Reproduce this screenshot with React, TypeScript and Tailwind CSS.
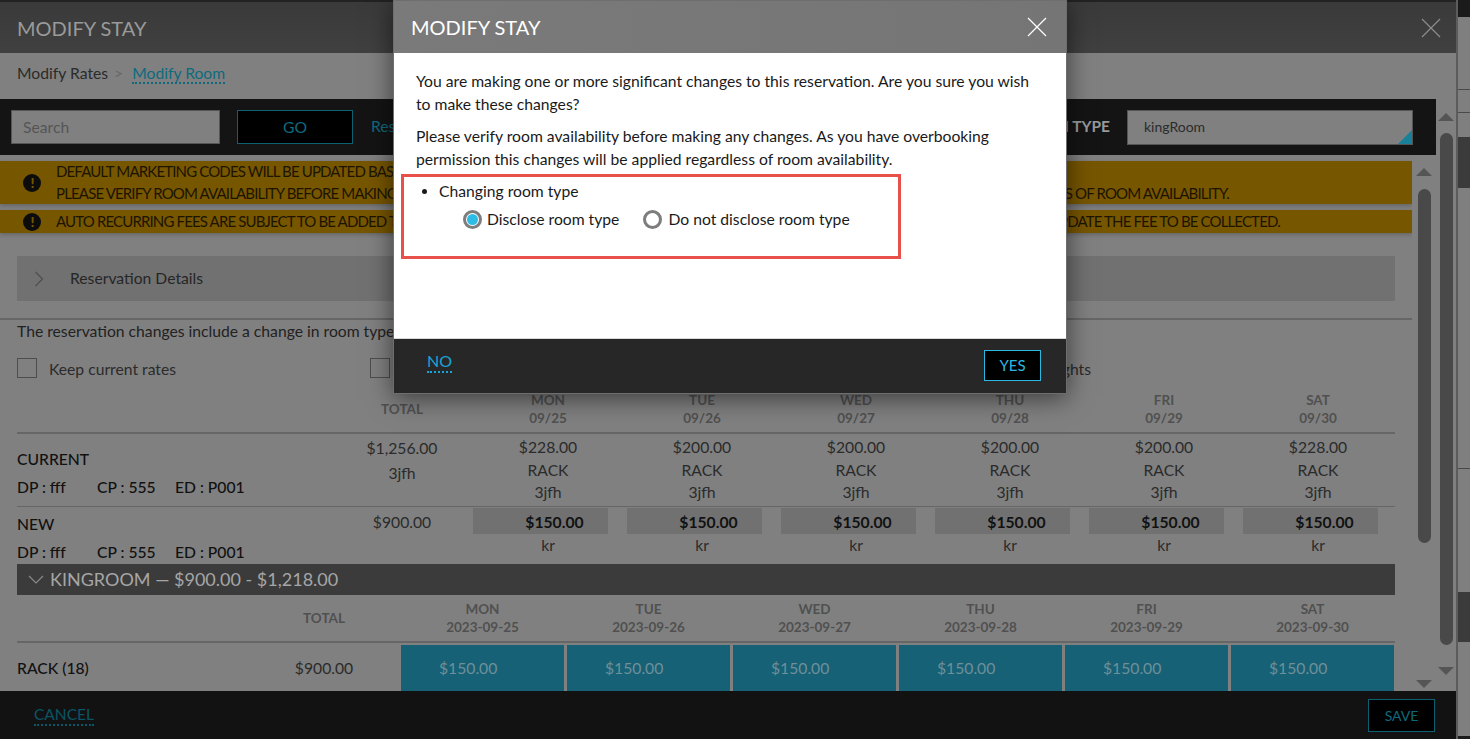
const days1 = [
  { d: 'MON', s: '09/25', p: '$228.00' },
  { d: 'TUE', s: '09/26', p: '$200.00' },
  { d: 'WED', s: '09/27', p: '$200.00' },
  { d: 'THU', s: '09/28', p: '$200.00' },
  { d: 'FRI', s: '09/29', p: '$200.00' },
  { d: 'SAT', s: '09/30', p: '$228.00' },
]

const days2 = [
  { d: 'MON', s: '2023-09-25' },
  { d: 'TUE', s: '2023-09-26' },
  { d: 'WED', s: '2023-09-27' },
  { d: 'THU', s: '2023-09-28' },
  { d: 'FRI', s: '2023-09-29' },
  { d: 'SAT', s: '2023-09-30' },
]

function Close({ className }: { className: string }) {
  return (
    <svg width="20" height="20" viewBox="0 0 20 20" className={className} fill="none" stroke="currentColor" strokeWidth="1.2">
      <path d="M1 1L19 19M19 1L1 19" />
    </svg>
  )
}

function Alert() {
  return (
    <span className="w-[18px] h-[18px] rounded-full bg-[#0c0c0c] text-[#775600] flex items-center justify-center shrink-0 text-[14px] font-black leading-none">!</span>
  )
}

function ScrollBar({ h, thumb }: { h: string; thumb: string }) {
  return (
    <div className={`w-[16px] flex flex-col items-center ${h}`}>
      <div className="w-0 h-0 border-x-[8px] border-x-transparent border-b-[8px] border-b-[#555]" />
      <div className={`w-[13px] rounded-full bg-[#494949] ${thumb}`} />
      <div className="flex-1" />
      <div className="w-0 h-0 border-x-[8px] border-x-transparent border-t-[8px] border-t-[#555]" />
    </div>
  )
}

export default function App() {
  return (
    <div className="relative w-[1470px] h-[739px] overflow-hidden bg-[#7f7f7f] font-['Lato','Carlito','Open_Sans',sans-serif] text-[15.7px] text-[#262626]">
      <div className="flex h-full">
        {/* stay panel behind the dialog */}
        <div className="w-[1458px] h-full flex flex-col border-r-2 border-[#5c5c5c]">
          <div className="h-[2px] bg-[#222] shrink-0" />
          <div className="h-[51px] shrink-0 bg-gradient-to-b from-[#3a3a3a] to-[#404040] flex items-center justify-between pl-[17px] pr-[15px]">
            <span className="text-[20px] text-[#9a9a9a]">MODIFY STAY</span>
            <Close className="text-[#8c8c8c]" />
          </div>

          <div className="flex-1 min-h-0 flex bg-[#808080]">
            <div className="w-[1436px] shrink-0 flex flex-col min-h-0">
              <div className="h-[46px] shrink-0 flex items-center pl-[17px] pb-[4px]">
                <span className="text-[#2b2b2b]">Modify Rates</span>
                <span className="text-[#666] ml-[6px] mr-[9px]">&gt;</span>
                <span className="text-[#0f6a7e] border-b-2 border-dotted border-[#0f6a7e] leading-[18px]">Modify Room</span>
              </div>

              <div className="h-[56px] shrink-0 bg-[#141414] flex items-center pl-[11px]">
                <div className="w-[209px] h-[34px] bg-[#808080] border border-[#555] pl-[11px] pt-[2px] flex items-center text-[#555]">Search</div>
                <div className="w-[116px] h-[34px] ml-[17px] pt-[2px] bg-black border border-[#0e5f72] text-[#0f6a7e] flex items-center justify-center">GO</div>
                <span className="ml-[18px] text-[#0f6a7e]">Reset</span>
                <div className="flex-1" />
                <span className="font-bold text-[#999] text-[15.5px]">ROOM TYPE</span>
                <div className="relative w-[286px] h-[35px] ml-[17px] mr-[23px] bg-[#808080] border border-[#555] pl-[16px] pb-[2px] flex items-center text-[14px] text-[#2b2b2b]">
                  kingRoom
                  <span className="absolute right-0 bottom-0 w-0 h-0 border-l-[14px] border-l-transparent border-b-[14px] border-b-[#19809a]" />
                </div>
              </div>

              <div className="flex-1 min-h-0 flex">
                <div className="w-[1412px] shrink-0 flex flex-col min-h-0 overflow-hidden">
                  <div className="mt-[6px] h-[43px] shrink-0 bg-[#775600] flex items-center pl-[23px] gap-[15px] text-[#1c1400] text-[15px] tracking-[-0.85px] leading-[21.5px] shadow-[0_2px_4px_rgba(0,0,0,0.2)] whitespace-nowrap">
                    <Alert />
                    <div>
                      <div>DEFAULT MARKETING CODES WILL BE UPDATED BASED ON THE NEW ROOM TYPE.</div>
                      <div>PLEASE VERIFY ROOM AVAILABILITY BEFORE MAKING ANY CHANGES. AS YOU HAVE OVERBOOKING PERMISSION THIS CHANGES WILL BE APPLIED REGARDLESS OF ROOM AVAILABILITY.</div>
                    </div>
                  </div>
                  <div className="mt-[6px] h-[23px] shrink-0 bg-[#775600] flex items-center pl-[23px] gap-[15px] text-[#1c1400] text-[15px] tracking-[-0.85px] shadow-[0_2px_4px_rgba(0,0,0,0.2)] whitespace-nowrap">
                    <Alert />
                    <span>AUTO RECURRING FEES ARE SUBJECT TO BE ADDED TO THIS RESERVATION. IF YOU WISH TO CHANGE THE RECURRING FEES, PLEASE GO TO THE FOLIO AND UPDATE THE FEE TO BE COLLECTED.</span>
                  </div>

                  <div className="mt-[23px] ml-[17px] w-[1378px] h-[45px] shrink-0 bg-[#717171] flex items-center pl-[17px]">
                    <svg width="10" height="16" viewBox="0 0 10 16" fill="none" stroke="#4f4f4f" strokeWidth="1.2">
                      <path d="M1.5 1L8.5 8L1.5 15" />
                    </svg>
                    <span className="ml-[26px] text-[#262626]">Reservation Details</span>
                  </div>

                  <div className="mt-[17px] h-[2px] shrink-0 bg-[#666]" />
                  <div className="pl-[17px] h-[23px] shrink-0 leading-[22px] text-[#222]">The reservation changes include a change in room type</div>

                  <div className="mt-[15px] h-[20px] shrink-0 flex items-center pl-[17px]">
                    <span className="w-[20px] h-[20px] border border-[#4d4d4d] shrink-0" />
                    <span className="ml-[12px] w-[321px] pt-[3px] text-[#2b2b2b]">Keep current rates</span>
                    <span className="w-[20px] h-[20px] border border-[#4d4d4d] shrink-0" />
                    <span className="w-[701px] pt-[3px] text-right text-[#2b2b2b]">Keep current rates for remaining nights</span>
                  </div>

                  {/* current vs new rates */}
                  <div className="ml-[17px] w-[1378px] shrink-0 mt-[13px] grid grid-cols-[326px_128px_repeat(6,154px)] h-[43px] border-b-2 border-[#666] text-[13.5px] font-bold text-[#505050] text-center leading-[18px]">
                    <div />
                    <div className="pr-[10px] pt-[9px] leading-[18px]">TOTAL</div>
                    {days1.map((d) => (
                      <div key={d.d}>
                        <div>{d.d}</div>
                        <div>{d.s}</div>
                      </div>
                    ))}
                  </div>

                  <div className="ml-[17px] w-[1378px] shrink-0 grid grid-cols-[326px_128px_repeat(6,154px)] h-[73px] border-b border-[#666] text-center text-[#2b2b2b]">
                    <div className="text-left text-[#111] font-medium pt-[13px]">
                      <div className="h-[29px] leading-[24px]">CURRENT</div>
                      <div className="flex"><span className="w-[80px]">DP : fff</span><span className="w-[78px]">CP : 555</span><span>ED : P001</span></div>
                    </div>
                    <div className="pr-[10px] pt-[2px] leading-[24.5px]">
                      <div>$1,256.00</div>
                      <div>3jfh</div>
                    </div>
                    {days1.map((d) => (
                      <div key={d.d} className="pt-[2px] leading-[22.5px]">
                        <div>{d.p}</div>
                        <div>RACK</div>
                        <div>3jfh</div>
                      </div>
                    ))}
                  </div>

                  <div className="ml-[17px] w-[1378px] shrink-0 grid grid-cols-[326px_128px_repeat(6,154px)] h-[57px] text-center text-[#2b2b2b]">
                    <div className="text-left text-[#111] font-medium pt-[6px]">
                      <div className="h-[28px] leading-[22px]">NEW</div>
                      <div className="flex"><span className="w-[80px]">DP : fff</span><span className="w-[78px]">CP : 555</span><span>ED : P001</span></div>
                    </div>
                    <div className="pr-[10px] pt-[4px] leading-[22px]">$900.00</div>
                    {days1.map((d) => (
                      <div key={d.d} className="pt-[1px]">
                        <div className="ml-[2px] w-[135px] h-[26px] bg-[#717171] flex items-center justify-center pl-[28px] pt-[4px] font-bold text-[#111]">$150.00</div>
                        <div className="leading-[24px] -mt-[1px]">kr</div>
                      </div>
                    ))}
                  </div>

                  <div className="ml-[17px] w-[1378px] h-[31px] shrink-0 bg-[#3b3b3b] flex items-center pl-[11px] text-[18px] text-[#a6a6a6]">
                    <svg width="16" height="10" viewBox="0 0 16 10" fill="none" stroke="#8c8c8c" strokeWidth="1.1">
                      <path d="M1 1L8 8L15 1" />
                    </svg>
                    <span className="ml-[6px]">KINGROOM — $900.00 - $1,218.00</span>
                  </div>

                  <div className="ml-[17px] w-[1378px] shrink-0 grid grid-cols-[248px_136px_repeat(6,166px)] h-[48px] border-b-2 border-[#666] text-[13.5px] font-bold text-[#505050] text-center leading-[18px]">
                    <div />
                    <div className="pr-[18px] pt-[14px]">TOTAL</div>
                    {days2.map((d) => (
                      <div key={d.d} className="pt-[5px] pr-[3px]">
                        <div>{d.d}</div>
                        <div>{d.s}</div>
                      </div>
                    ))}
                  </div>

                  <div className="ml-[17px] w-[1378px] shrink-0 grid grid-cols-[248px_136px_repeat(6,166px)] mt-[2px] h-[46px]">
                    <div className="font-medium text-[#111] leading-[46px]">RACK (18)</div>
                    <div className="pr-[18px] text-center leading-[46px] text-[#2b2b2b]">$900.00</div>
                    {days2.map((d) => (
                      <div key={d.d} className="w-[163px] bg-[#166176] text-[#6f8f99] pl-[38px] leading-[46px]">$150.00</div>
                    ))}
                  </div>
                </div>
                <div className="w-[24px] flex justify-center pt-[13px]">
                  <ScrollBar h="h-[520px]" thumb="h-[354px] mt-[13px]" />
                </div>
              </div>
            </div>
            <div className="flex-1 flex justify-center">
              <div className="pt-[60px]">
                <ScrollBar h="h-[562px]" thumb="h-[512px] mt-[12px]" />
              </div>
            </div>
          </div>

          <div className="h-[48px] shrink-0 bg-[#121212] flex items-center justify-between pl-[34px] pr-[21px]">
            <span className="text-[#0b5566] border-b-2 border-dotted border-[#0b5566] text-[15.5px] leading-[20px]">CANCEL</span>
            <span className="w-[67px] h-[33px] bg-black border border-[#0e5f72] text-[#0f6a7e] text-[14px] flex items-center justify-center">SAVE</span>
          </div>
        </div>

        {/* page behind */}
        <div className="flex-1 flex flex-col bg-[#7f7f7f]">
          <div className="h-[17px] bg-[#1b1b1b]" />
          <div className="h-[73px] border-b border-[#4a4a4a]" />
          <div className="h-[23px] border-b border-[#4a4a4a]" />
          <div className="h-[24px]" />
          <div className="h-[51px] bg-[#3b3b3b]" />
          <div className="h-[281px] border-b border-[#4a4a4a]" />
          <div className="h-[123px]" />
          <div className="h-[50px] bg-[#3b3b3b]" />
          <div className="flex-1" />
          <div className="h-[3px] bg-[#1b1b1b]" />
        </div>
      </div>

      {/* confirm dialog */}
      <div className="absolute left-[393px] top-0 w-[674px] h-[394px] border border-[#6e6e6e] shadow-[0_4px_24px_rgba(0,0,0,0.55)] flex flex-col">
        <div className="h-[52px] shrink-0 bg-gradient-to-r from-[#7a7a7a] to-[#757575] flex items-center justify-between pl-[17px] pr-[19px]">
          <span className="text-[20px] text-white">MODIFY STAY</span>
          <Close className="text-white" />
        </div>
        <div className="flex-1 bg-white px-[22px] pt-[17px] leading-[23px] text-[#1a1a1a]">
          <p>You are making one or more significant changes to this reservation. Are you sure you wish to make these changes?</p>
          <p className="mt-[9px]">Please verify room availability before making any changes. As you have overbooking permission this changes will be applied regardless of room availability.</p>
          <ul className="list-disc pl-[23px] mt-[9px]">
            <li>Changing room type</li>
          </ul>
          <div className="flex items-center mt-[5px] ml-[47px]">
            <span className="w-[19px] h-[19px] rounded-full border-[3px] border-[#7d7d7d] flex items-center justify-center shrink-0">
              <span className="w-[11px] h-[11px] rounded-full bg-[#2cbce6]" />
            </span>
            <span className="ml-[5px]">Disclose room type</span>
            <span className="ml-[24px] w-[19px] h-[19px] rounded-full border-[3px] border-[#7d7d7d] shrink-0" />
            <span className="ml-[6px]">Do not disclose room type</span>
          </div>
        </div>
        <div className="h-[55px] shrink-0 bg-[#272727] border-t border-[#d9d9d9] flex items-center justify-between pl-[33px] pr-[25px]">
          <span className="text-[#19a5d8] border-b-2 border-dotted border-[#19a5d8] text-[16px] leading-[21px] -mt-[9px]">NO</span>
          <span className="w-[57px] h-[31px] -mt-[2px] bg-black border border-[#2bb8e0] text-[#2bb8e0] text-[15px] flex items-center justify-center">YES</span>
        </div>
        <div className="absolute left-[7px] top-[173px] w-[500px] h-[85px] border-[3px] border-[#e8504a]" />
      </div>
    </div>
  )
}
